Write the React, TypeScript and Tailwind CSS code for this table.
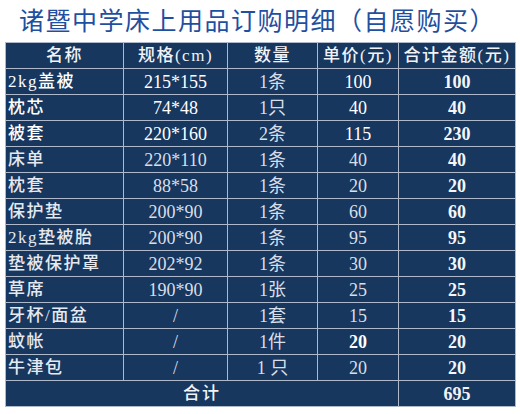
import React from "react";

type Row = {
  name: string;
  size: string;
  qty: string;
  price: string;
  total: string;
  strong?: boolean;
  boldPrice?: boolean;
};

const rows: Row[] = [
  { name: "2kg盖被", size: "215*155", qty: "1条", price: "100", total: "100", strong: true },
  { name: "枕芯", size: "74*48", qty: "1只", price: "40", total: "40", strong: true },
  { name: "被套", size: "220*160", qty: "2条", price: "115", total: "230", strong: true },
  { name: "床单", size: "220*110", qty: "1条", price: "40", total: "40" },
  { name: "枕套", size: "88*58", qty: "1条", price: "20", total: "20" },
  { name: "保护垫", size: "200*90", qty: "1条", price: "60", total: "60" },
  { name: "2kg垫被胎", size: "200*90", qty: "1条", price: "95", total: "95" },
  { name: "垫被保护罩", size: "202*92", qty: "1条", price: "30", total: "30" },
  { name: "草席", size: "190*90", qty: "1张", price: "25", total: "25" },
  { name: "牙杯/面盆", size: "/", qty: "1套", price: "15", total: "15" },
  { name: "蚊帐", size: "/", qty: "1件", price: "20", total: "20", boldPrice: true },
  { name: "牛津包", size: "/", qty: "1 只", price: "20", total: "20" },
];

const font = { fontFamily: '"Liberation Serif", "Noto Sans CJK SC", serif' };

export default function App() {
  return (
    <div className="w-[520px] h-[414px] bg-white overflow-hidden" style={font}>
      <h1
        className="h-[42px] pl-[19px] pt-[3px] text-[25px] leading-[32px] tracking-[1.5px] text-[#1f4fa0] font-normal whitespace-nowrap"
        style={{ fontFamily: '"Noto Sans CJK SC", sans-serif' }}
      >
        诸暨中学床上用品订购明细（自愿购买）
      </h1>

      <table className="ml-[5px] w-[510px] table-fixed border-collapse bg-[#17375f] text-[#f1f3f6] text-[17px] leading-none">
        <colgroup>
          <col className="w-[118px]" />
          <col className="w-[104px]" />
          <col className="w-[90px]" />
          <col className="w-[81px]" />
          <col className="w-[117px]" />
        </colgroup>
        <thead>
          <tr className="h-[26px]">
            {["名称", "规格(cm)", "数量", "单价(元)", "合计金额(元)"].map((h) => (
              <th key={h} className="border border-[#aeb9cc] font-medium text-center tracking-[1.5px] px-0 whitespace-nowrap">
                {h}
              </th>
            ))}
          </tr>
        </thead>
        <tbody>
          {rows.map((r) => (
            <tr key={r.name} className="h-[26px]">
              <td className={`border border-[#aeb9cc] pl-[2px] tracking-[1.5px] whitespace-nowrap font-medium ${r.strong ? "text-white" : "text-[#e6eaf0]"}`}>
                {r.name}
              </td>
              <td className={`border border-[#aeb9cc] text-center text-[18px] ${r.strong ? "text-white" : "text-[#d9dfe8]"}`}>
                {r.size}
              </td>
              <td className="border border-[#aeb9cc] text-center text-[18px] text-[#d9dfe8] whitespace-pre">{r.qty}</td>
              <td className={`border border-[#aeb9cc] text-center text-[18px] ${r.boldPrice ? "font-bold text-white" : r.strong ? "text-white" : "text-[#d9dfe8]"}`}>
                {r.price}
              </td>
              <td className="border border-[#aeb9cc] text-center text-[18px] font-bold text-[#f4f6f9]">{r.total}</td>
            </tr>
          ))}
          <tr className="h-[26px]">
            <td colSpan={4} className="border border-[#aeb9cc] text-center tracking-[2px] font-medium">
              合计
            </td>
            <td className="border border-[#aeb9cc] text-center text-[18px] font-bold">695</td>
          </tr>
        </tbody>
      </table>
    </div>
  );
}
